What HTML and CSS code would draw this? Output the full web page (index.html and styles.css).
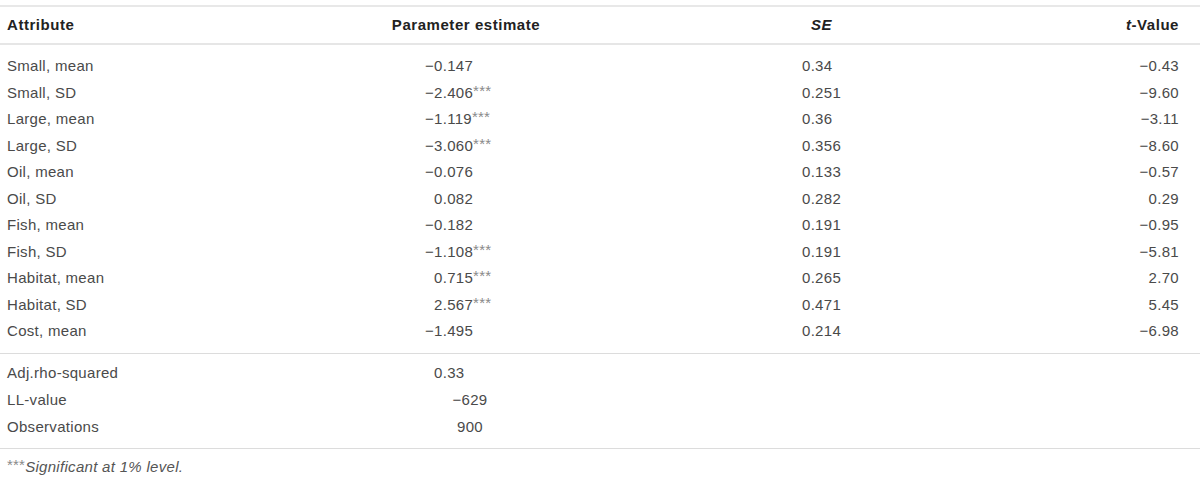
FILE: index.html
```html
<!DOCTYPE html>
<html lang="en">
<head>
<meta charset="utf-8">
<title>Parameter estimates</title>
<link rel="stylesheet" href="styles.css">
</head>
<body>
<table class="tbl">
  <colgroup>
    <col class="c1"><col class="c2"><col class="c3"><col class="c4">
  </colgroup>
  <thead>
    <tr>
      <th class="h-attr">Attribute</th>
      <th class="h-est">Parameter estimate</th>
      <th class="h-se"><i>SE</i></th>
      <th class="h-t"><i>t</i>-Value</th>
    </tr>
  </thead>
  <tbody class="main">
    <tr class="first"><td class="attr">Small, mean</td><td class="est">−0.147</td><td class="se">0.34</td><td class="tv">−0.43</td></tr>
    <tr><td class="attr">Small, SD</td><td class="est">−2.406<sup class="sig">***</sup></td><td class="se">0.251</td><td class="tv">−9.60</td></tr>
    <tr><td class="attr">Large, mean</td><td class="est">−1.119<sup class="sig">***</sup></td><td class="se">0.36</td><td class="tv">−3.11</td></tr>
    <tr><td class="attr">Large, SD</td><td class="est">−3.060<sup class="sig">***</sup></td><td class="se">0.356</td><td class="tv">−8.60</td></tr>
    <tr><td class="attr">Oil, mean</td><td class="est">−0.076</td><td class="se">0.133</td><td class="tv">−0.57</td></tr>
    <tr><td class="attr">Oil, SD</td><td class="est"><span class="ph">−</span>0.082</td><td class="se">0.282</td><td class="tv">0.29</td></tr>
    <tr><td class="attr">Fish, mean</td><td class="est">−0.182</td><td class="se">0.191</td><td class="tv">−0.95</td></tr>
    <tr><td class="attr">Fish, SD</td><td class="est">−1.108<sup class="sig">***</sup></td><td class="se">0.191</td><td class="tv">−5.81</td></tr>
    <tr><td class="attr">Habitat, mean</td><td class="est"><span class="ph">−</span>0.715<sup class="sig">***</sup></td><td class="se">0.265</td><td class="tv">2.70</td></tr>
    <tr><td class="attr">Habitat, SD</td><td class="est"><span class="ph">−</span>2.567<sup class="sig">***</sup></td><td class="se">0.471</td><td class="tv">5.45</td></tr>
    <tr class="last"><td class="attr">Cost, mean</td><td class="est">−1.495</td><td class="se">0.214</td><td class="tv">−6.98</td></tr>
  </tbody>
  <tbody class="stats">
    <tr class="first"><td class="attr">Adj.rho-squared</td><td class="est"><span class="ph">−</span>0.33</td><td></td><td></td></tr>
    <tr><td class="attr">LL-value</td><td class="mid">−629</td><td></td><td></td></tr>
    <tr class="last"><td class="attr">Observations</td><td class="mid">900</td><td></td><td></td></tr>
  </tbody>
  <tfoot>
    <tr><td class="note" colspan="4"><span class="note-sig">***</span>Significant at 1% level.</td></tr>
  </tfoot>
</table>
</body>
</html>
```
FILE: styles.css
```css
html, body {
  margin: 0;
  padding: 0;
  background: #ffffff;
}
body {
  font-family: "Liberation Sans", Arial, Helvetica, sans-serif;
  font-size: 15px;
  color: #4a4a4a;
  letter-spacing: 0.3px;
}
.tbl {
  margin-top: 5px;
  width: 1200px;
  border-collapse: collapse;
  table-layout: fixed;
}
.c1 { width: 380px; }
.c2 { width: 172px; }
.c3 { width: 548px; }
.c4 { width: 100px; }

thead th {
  border-top: 2px solid #e8e8e8;
  border-bottom: 2px solid #e6e6e6;
  padding: 8px 0 8px 0;
  line-height: 20px;
  font-weight: bold;
  color: #222222;
  letter-spacing: 0.55px;
}
.h-attr { text-align: left; padding-left: 7px; }
.h-est { text-align: center; }
.h-se { text-align: left; padding-left: 259px; }
.h-t { text-align: right; padding-right: 21px; }

td {
  padding: 0;
  line-height: 26.5px;
  white-space: nowrap;
}
.attr { padding-left: 7px; }
.est { padding-left: 45px; }
.mid { text-align: center; padding-left: 8px; }
.se { padding-left: 250px; }
.tv { text-align: right; padding-right: 21px; }

.main tr.first td { padding-top: 8px; }
.main tr.last td { padding-bottom: 8px; border-bottom: 1px solid #dcdcdc; }
.stats td { line-height: 27px; }
.stats tr.first td { padding-top: 5px; }
.stats tr.last td { padding-bottom: 8px; border-bottom: 1px solid #dcdcdc; }

.ph { visibility: hidden; }
.sig {
  font-size: 15px;
  letter-spacing: 0.2px;
  color: #8a8a8a;
  vertical-align: 2px;
  line-height: 0;
}
.note {
  padding: 8px 0 0 7px;
  line-height: 20px;
  font-style: italic;
  color: #555555;
}
.note-sig {
  font-style: normal;
  font-size: 15px;
  color: #8a8a8a;
  letter-spacing: 0.2px;
  vertical-align: 2px;
  line-height: 0;
}
```
